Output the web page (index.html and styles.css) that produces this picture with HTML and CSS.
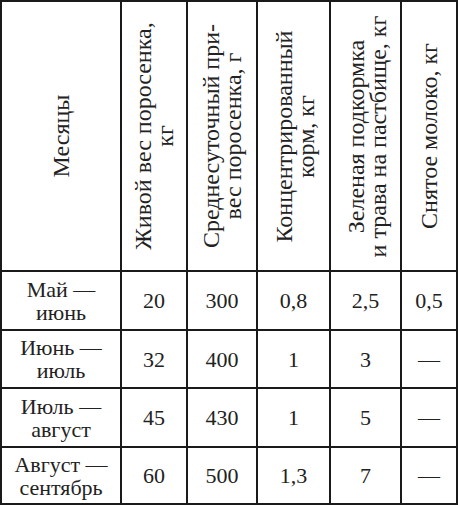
FILE: index.html
```html
<!DOCTYPE html>
<html>
<head>
<meta charset="utf-8">
<link rel="stylesheet" href="styles.css">
</head>
<body>
<div class="feed">
  <div class="cell head w-month"><div class="rot">Месяцы</div></div>
  <div class="cell head w-weight"><div class="rot">Живой вес поросенка,<br>кг</div></div>
  <div class="cell head w-gain"><div class="rot">Среднесуточный при-<br>вес поросенка, г</div></div>
  <div class="cell head w-conc"><div class="rot">Концентрированный<br>корм, кг</div></div>
  <div class="cell head w-green"><div class="rot">Зеленая подкормка<br>и трава на пастбище, кг</div></div>
  <div class="cell head w-milk"><div class="rot">Снятое молоко, кг</div></div>

  <div class="cell">Май —<br>июнь</div>
  <div class="cell">20</div><div class="cell">300</div><div class="cell">0,8</div><div class="cell">2,5</div><div class="cell">0,5</div>

  <div class="cell">Июнь —<br>июль</div>
  <div class="cell">32</div><div class="cell">400</div><div class="cell">1</div><div class="cell">3</div><div class="cell">—</div>

  <div class="cell">Июль —<br>август</div>
  <div class="cell">45</div><div class="cell">430</div><div class="cell">1</div><div class="cell">5</div><div class="cell">—</div>

  <div class="cell">Август —<br>сентябрь</div>
  <div class="cell">60</div><div class="cell">500</div><div class="cell">1,3</div><div class="cell">7</div><div class="cell">—</div>
</div>
</body>
</html>
```

FILE: styles.css
```css
html, body {
  margin: 0;
  padding: 0;
}

body {
  font-family: Tinos, "Liberation Serif", "Times New Roman", serif;
  color: #222222;
  background: #ffffff;
}

.feed {
  display: grid;
  width: 454px;
  grid-template-columns: 118px 64px 68px 71px 69px 54px;
  grid-template-rows: 268px 57px 56px 57px 55px;
  gap: 2px;
  padding: 2px;
  background: #1a1a1a;
}

.cell {
  font-family: Tinos, "Liberation Serif", "Times New Roman", serif;
  background: #ffffff;
  display: flex;
  align-items: center;
  justify-content: center;
  text-align: center;
  font-size: 22px;
  line-height: 23px;
}

.head {
  font-size: 24px;
  line-height: 22px;
}

.rot {
  flex: none;
  width: 268px;
  display: flex;
  flex-direction: column;
  justify-content: center;
  transform: rotate(-90deg);
  white-space: nowrap;
}

.w-month .rot { height: 118px; }
.w-weight .rot { height: 64px; }
.w-gain .rot { height: 68px; }
.w-conc .rot { height: 71px; }
.w-green .rot { height: 69px; }
.w-milk .rot { height: 54px; }
```
